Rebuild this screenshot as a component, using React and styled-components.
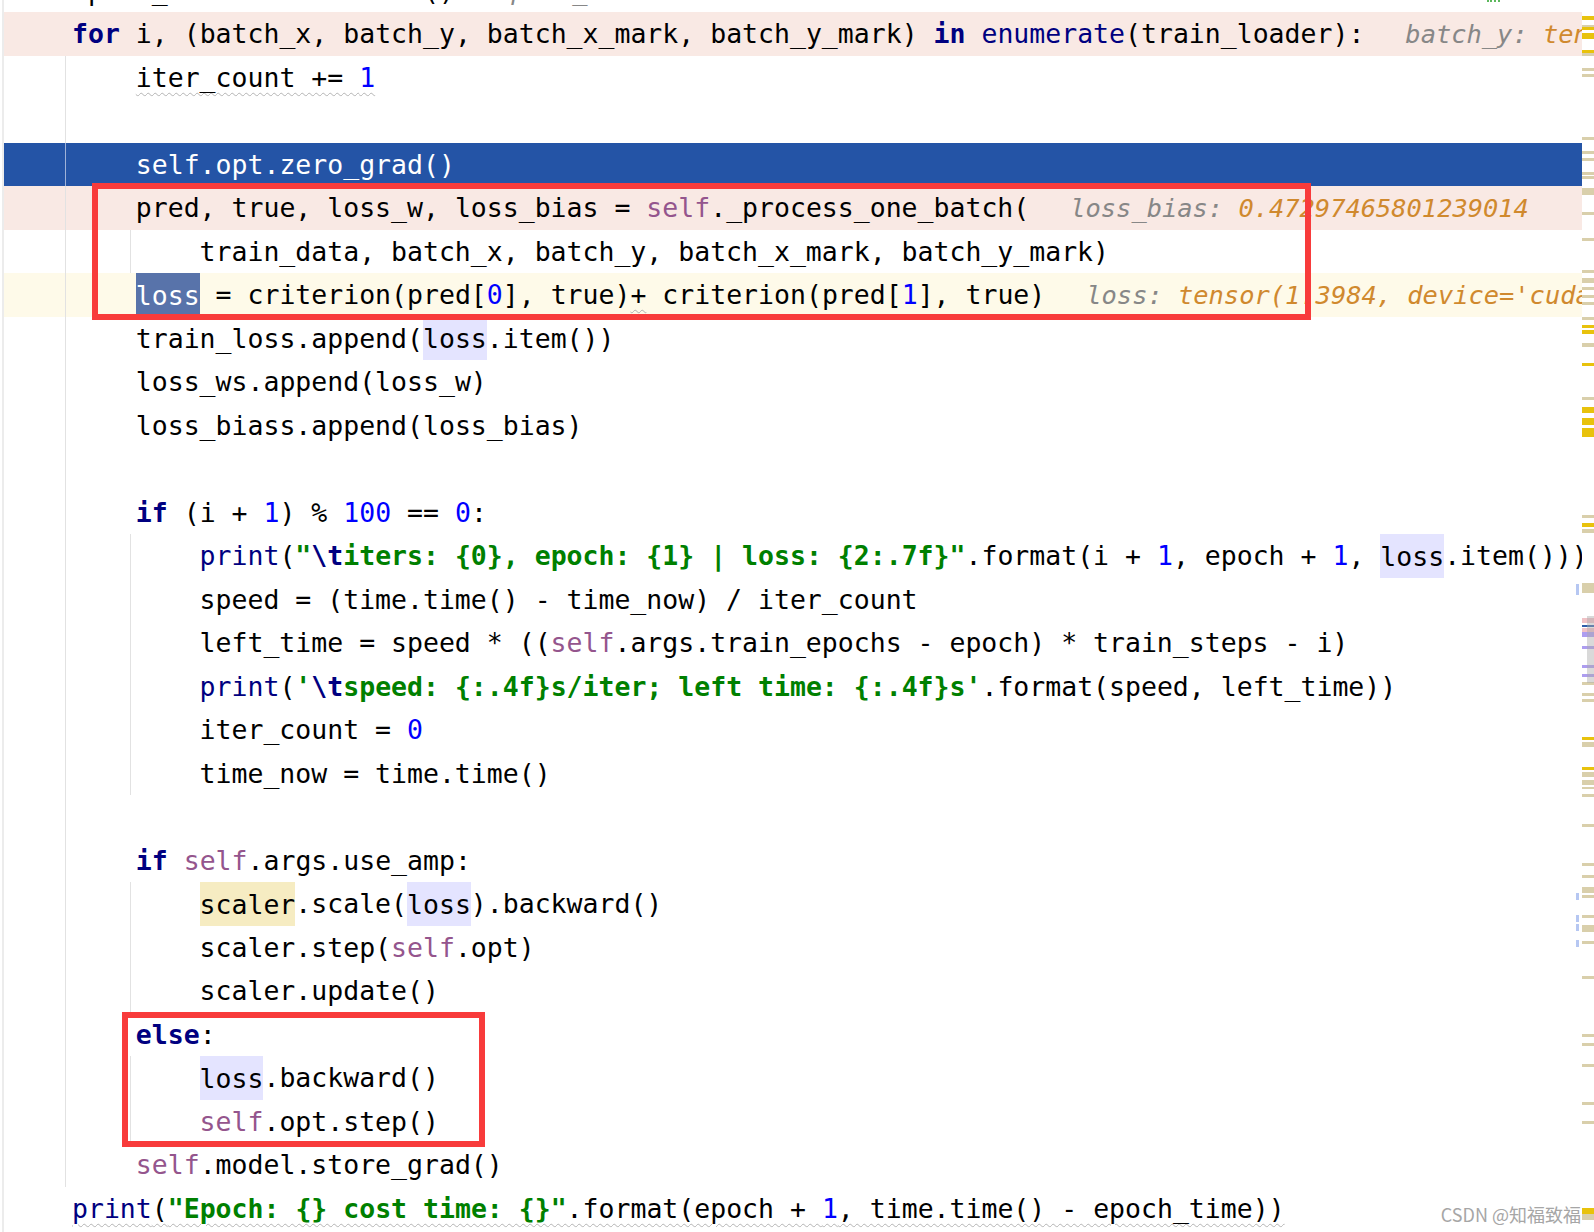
import React from 'react';
import styled, { createGlobalStyle, css } from 'styled-components';

const GlobalStyle = createGlobalStyle`
  html, body {
    margin: 0;
    padding: 0;
    background: #fff;
  }
  body {
    width: 1594px;
    height: 1232px;
    overflow: hidden;
  }
`

const Screen = styled.div`
  position: relative;
  display: flex;
  width: 1594px;
  height: 1232px;
  overflow: hidden;
  background: #fff;
`

const Editor = styled.div`
  flex: 1;
  min-width: 0;
  margin-left: 2px;
  border-left: 2px solid #ececec;
  overflow: hidden;
`

const Lines = styled.div`
  margin-top: -31.5px;
  font-family: "DejaVu Sans Mono", "Liberation Mono", monospace;
  font-size: 26.5px;
  color: #000;
`

const bands = {
  pink: '#f9e9e4',
  yellow: '#fefae9',
  blue: '#2454a6',
}

const guideBg = (guides = [], band) => {
  const gc = band === 'blue' ? '#9fb2d8' : '#e2e2e2'
  const layers = guides.map(x => `linear-gradient(${gc}, ${gc}) ${x}px 0 / 1px 100% no-repeat`)
  layers.push(bands[band] || '#fff')
  return layers.join(', ')
}

const Line = styled.div`
  height: 43.5px;
  line-height: 43.5px;
  white-space: pre;
  padding-left: ${p => 68 + p.$lvl * 63.8}px;
  color: ${p => (p.$band === 'blue' ? '#fff' : '#000')};
  background: ${p => guideBg(p.$guides, p.$band)};
`

const Code = styled.span`
  ${p => p.$wavy && css`
    text-decoration: underline wavy #b4b4b4;
    text-decoration-thickness: 1px;
    text-underline-offset: 5px;
  `}
`

const kinds = {
  kw: css`color: #000080; font-weight: bold;`,
  bi: css`color: #000080;`,
  num: css`color: #0000ff;`,
  self: css`color: #94558d;`,
  str: css`color: #008000; font-weight: bold;`,
  esc: css`color: #000080; font-weight: bold;`,
  hl: css`background: #e4e4ff; padding: 6.5px 0;`,
  sel: css`background: #5873aa; color: #fff; padding: 6.5px 0;`,
  hly: css`background: #f6ecc2; padding: 6.5px 0;`,
  wavy: css`
    text-decoration: underline wavy #b0b0b0;
    text-decoration-thickness: 1px;
    text-underline-offset: 5px;
  `,
}

const Tok = styled.span`
  ${p => kinds[p.$k]}
`

const Hint = styled.span`
  margin-left: 41px;
  font-size: 25.4px;
  font-style: italic;
  color: #878787;
`

const HintVal = styled.span`
  color: #d0892e;
`

const RedBox = styled.div`
  position: absolute;
  left: ${p => p.$x}px;
  top: ${p => p.$y}px;
  width: ${p => p.$w}px;
  height: ${p => p.$h}px;
  box-sizing: border-box;
  border: 6px solid #f83b3b;
  pointer-events: none;
`

const Stripe = styled.div`
  position: relative;
  flex: none;
  width: 12px;
  background: #fff;
`

const tickColors = {
  b: '#d9cfab',
  y: '#e8c20c',
  p: '#f0c2c6',
  d: '#2f5eaa',
  v: '#ad9df0',
  l: '#b6c7f2',
}

const Tick = styled.div`
  position: absolute;
  left: ${p => (p.$c === 'l' ? -6 : 0)}px;
  top: ${p => p.$y}px;
  width: ${p => (p.$c === 'l' ? 3 : 12)}px;
  height: ${p => p.$h}px;
  background: ${p => tickColors[p.$c]};
`

const Thumb = styled.div`
  position: absolute;
  left: 5px;
  top: 616px;
  width: 7px;
  height: 67px;
  background: rgba(170, 170, 170, 0.45);
`

const GreenDots = styled.div`
  position: absolute;
  left: 1487px;
  top: 0;
  width: 13px;
  border-top: 2px dotted #5cb85c;
`

const Watermark = styled.div`
  position: absolute;
  right: 13px;
  top: 1201px;
  font-family: "Noto Sans CJK SC", "Noto Sans", sans-serif;
  font-size: 18px;
  line-height: 26px;
  color: #a6a6a6;
  white-space: nowrap;
`

const parse = src =>
  src.split(/(«[^»]*»)/).filter(Boolean).map((s, i) => {
    if (s.startsWith('«')) {
      const body = s.slice(1, -1)
      const c = body.indexOf(':')
      return <Tok key={i} $k={body.slice(0, c)}>{body.slice(c + 1)}</Tok>
    }
    return <React.Fragment key={i}>{s}</React.Fragment>
  })

const G1 = [61]
const G2 = [61, 126]

const code = [
  { lvl: 0, src: 'epoch_time = time.time()', hint: ['epoch_time', '1677211468.3946712'] },
  { lvl: 0, band: 'pink', src: '«kw:for» i, (batch_x, batch_y, batch_x_mark, batch_y_mark) «kw:in» «bi:enumerate»(train_loader):', hint: ['batch_y', 'tensor([[[-0.4420,  0.1632]]])'] },
  { lvl: 1, g: G1, wavy: true, src: 'iter_count += «num:1»' },
  { lvl: 1, g: G1, src: '' },
  { lvl: 1, g: G1, band: 'blue', src: 'self.opt.zero_grad()' },
  { lvl: 1, g: G1, band: 'pink', src: 'pred, true, loss_w, loss_bias = «self:self»._process_one_batch(', hint: ['loss_bias', '0.47297465801239014'] },
  { lvl: 2, g: G2, src: 'train_data, batch_x, batch_y, batch_x_mark, batch_y_mark)' },
  { lvl: 1, g: G1, band: 'yellow', src: '«sel:loss» = criterion(pred[«num:0»], true)«wavy:+» criterion(pred[«num:1»], true)', hint: ['loss', "tensor(1.3984, device='cuda:0', grad_fn=<AddBackward0>)"] },
  { lvl: 1, g: G1, src: 'train_loss.append(«hl:loss».item())' },
  { lvl: 1, g: G1, src: 'loss_ws.append(loss_w)' },
  { lvl: 1, g: G1, src: 'loss_biass.append(loss_bias)' },
  { lvl: 1, g: G1, src: '' },
  { lvl: 1, g: G1, src: '«kw:if» (i + «num:1») % «num:100» == «num:0»:' },
  { lvl: 2, g: G2, src: '«bi:print»(«str:\"»«esc:\\t»«str:iters: {0}, epoch: {1} | loss: {2:.7f}\"».format(i + «num:1», epoch + «num:1», «hl:loss».item()))' },
  { lvl: 2, g: G2, src: 'speed = (time.time() - time_now) / iter_count' },
  { lvl: 2, g: G2, src: 'left_time = speed * ((«self:self».args.train_epochs - epoch) * train_steps - i)' },
  { lvl: 2, g: G2, src: "«bi:print»(«str:'»«esc:\\t»«str:speed: {:.4f}s/iter; left time: {:.4f}s'».format(speed, left_time))" },
  { lvl: 2, g: G2, src: 'iter_count = «num:0»' },
  { lvl: 2, g: G2, src: 'time_now = time.time()' },
  { lvl: 1, g: G1, src: '' },
  { lvl: 1, g: G1, src: '«kw:if» «self:self».args.use_amp:' },
  { lvl: 2, g: G2, src: '«hly:scaler».scale(«hl:loss»).backward()' },
  { lvl: 2, g: G2, src: 'scaler.step(«self:self».opt)' },
  { lvl: 2, g: G2, src: 'scaler.update()' },
  { lvl: 1, g: G1, src: '«kw:else»:' },
  { lvl: 2, g: G2, src: '«hl:loss».backward()' },
  { lvl: 2, g: G2, src: '«self:self».opt.step()' },
  { lvl: 1, g: G1, src: '«self:self».model.store_grad()' },
  { lvl: 0, wavy: true, src: '«bi:print»(«str:\"Epoch: {} cost time: {}\"».format(epoch + «num:1», time.time() - epoch_time))' },
]

// error stripe marks: [y, height, colour]
const ticks = [
  [16, 4, 'y'], [25, 2, 'b'], [27, 3, 'y'], [33, 6, 'y'], [50, 3, 'y'], [53, 3, 'b'],
  [68, 3, 'b'], [74, 3, 'b'], [137, 3, 'b'], [151, 3, 'b'], [158, 3, 'b'], [172, 3, 'b'],
  [176, 3, 'b'], [188, 7, 'b'], [212, 3, 'b'], [238, 3, 'b'], [270, 3, 'b'], [278, 5, 'b'],
  [287, 3, 'b'], [295, 3, 'b'], [302, 3, 'b'], [317, 3, 'b'], [325, 3, 'y'], [330, 4, 'y'],
  [343, 4, 'b'], [363, 3, 'y'], [397, 3, 'b'], [407, 6, 'y'], [418, 7, 'y'], [428, 9, 'y'],
  [515, 3, 'b'], [523, 4, 'y'], [529, 4, 'b'], [583, 10, 'b'], [618, 5, 'p'], [625, 2, 'd'],
  [628, 4, 'p'], [632, 5, 'v'], [646, 3, 'v'], [665, 3, 'v'], [674, 3, 'v'], [682, 3, 'b'],
  [693, 3, 'b'], [699, 3, 'b'], [737, 3, 'y'], [742, 5, 'b'], [767, 3, 'y'], [772, 5, 'b'],
  [780, 5, 'b'], [787, 2, 'b'], [794, 3, 'b'], [824, 3, 'b'], [863, 3, 'b'], [875, 3, 'b'],
  [887, 6, 'b'], [895, 3, 'b'], [915, 3, 'b'], [925, 7, 'b'], [941, 3, 'b'], [976, 3, 'b'],
  [1034, 3, 'b'], [1043, 3, 'b'], [1064, 3, 'b'], [1102, 3, 'b'], [1121, 3, 'b'],
  [1208, 6, 'y'], [1214, 6, 'b'],
  [584, 11, 'l'], [893, 7, 'l'], [915, 7, 'l'], [924, 7, 'l'], [940, 7, 'l'],
]

const App = () => {
  return (
    <Screen>
      <GlobalStyle />
      <Editor>
        <Lines>
          {code.map((l, i) => (
            <Line key={i} $lvl={l.lvl} $guides={l.g} $band={l.band}>
              <Code $wavy={l.wavy}>{parse(l.src)}</Code>
              {l.hint && (
                <Hint>
                  {l.hint[0]}: <HintVal>{l.hint[1]}</HintVal>
                </Hint>
              )}
            </Line>
          ))}
        </Lines>
      </Editor>
      <Stripe>
        {ticks.map(([y, h, c], i) => (
          <Tick key={i} $y={y} $h={h} $c={c} />
        ))}
        <Thumb />
      </Stripe>
      <GreenDots />
      <RedBox $x={92} $y={183} $w={1219} $h={137} />
      <RedBox $x={122} $y={1012} $w={363} $h={135} />
      <Watermark>CSDN @知福致福</Watermark>
    </Screen>
  )
}

export default App
